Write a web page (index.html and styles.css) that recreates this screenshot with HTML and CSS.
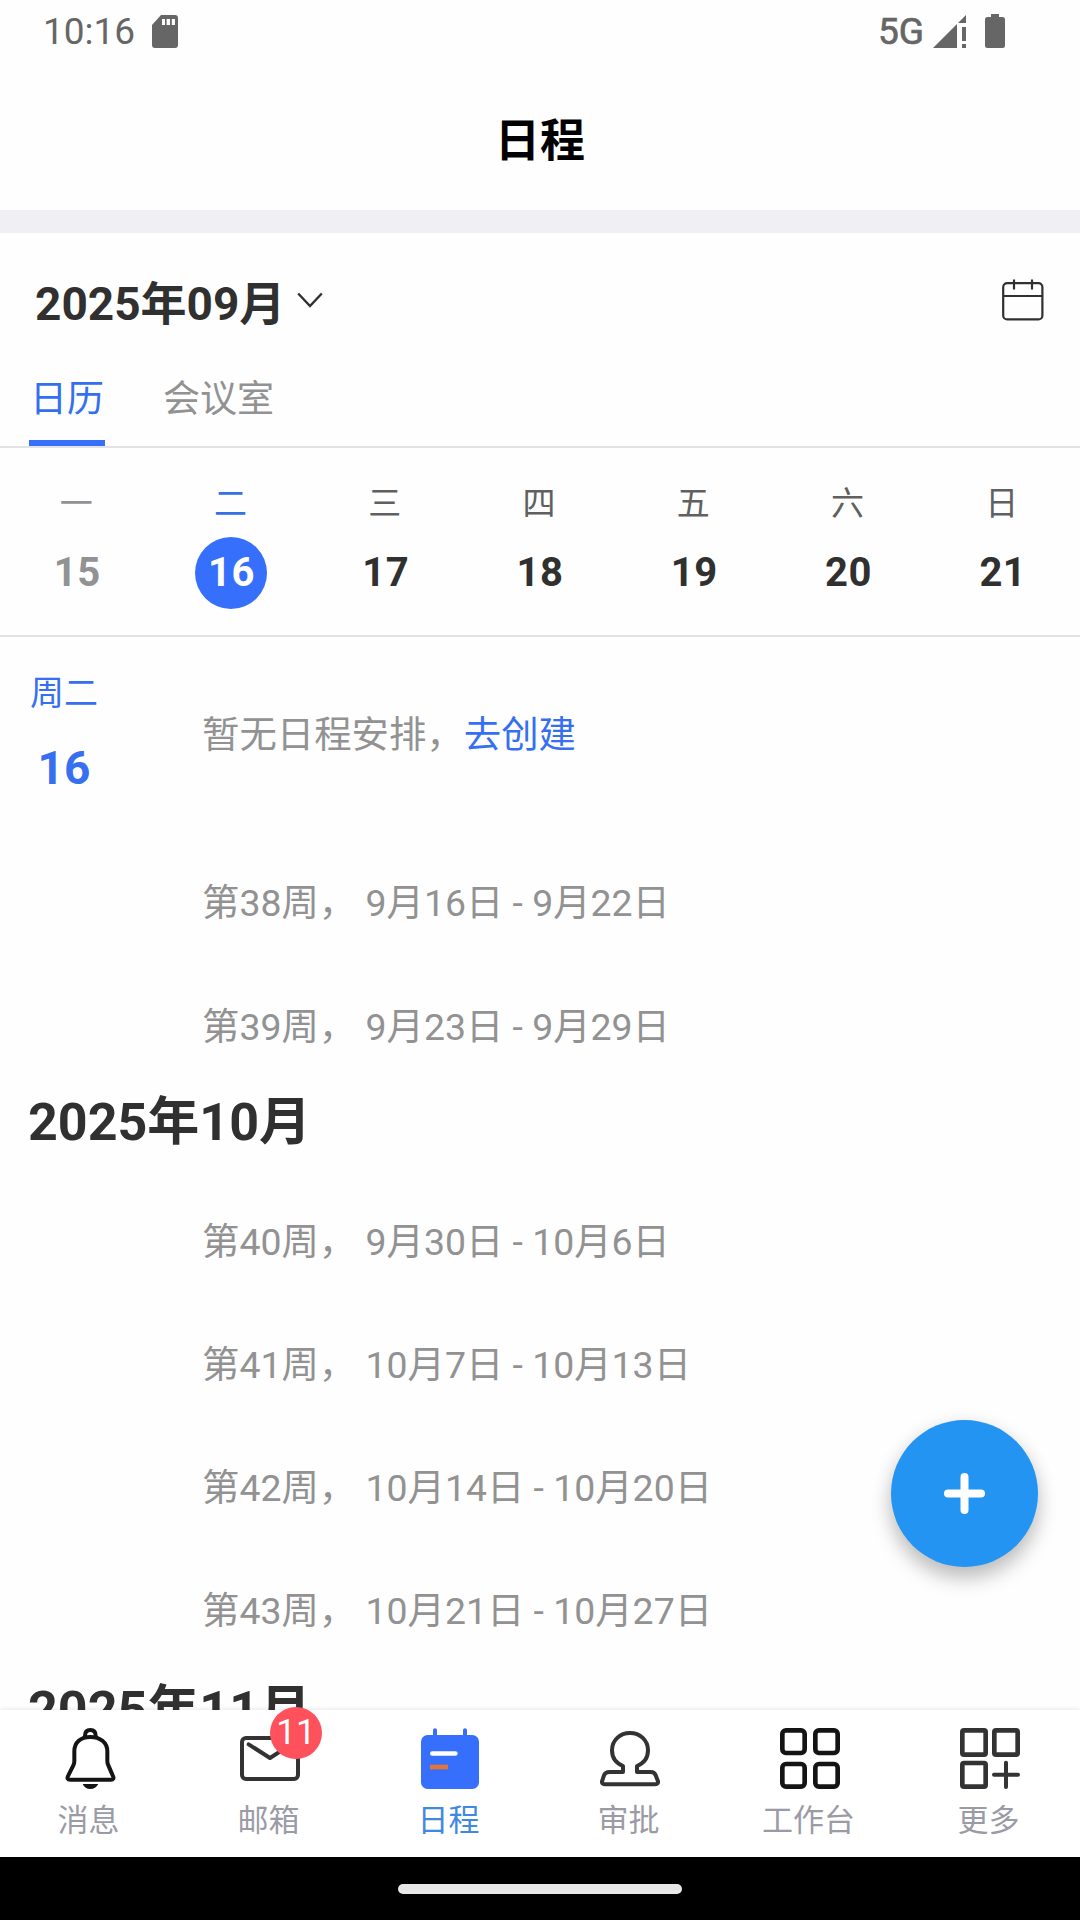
FILE: index.html
```html
<!DOCTYPE html>
<html lang="zh-CN">
<head>
<meta charset="utf-8">
<title>日程</title>
<link rel="stylesheet" href="styles.css">
</head>
<body>
<div class="screen">
  <header class="status">
    <span class="clock">10:16</span>
    <svg class="sd" viewBox="0 0 26 33"><path fill-rule="evenodd" d="M9 0H23Q26 0 26 3V30Q26 33 23 33H3Q0 33 0 30V10ZM10 4V10H13V4ZM14.600 4V10H18V4ZM19.800 4V10H23V4Z"/></svg>
    <span class="network">5G</span>
    <svg class="signal" viewBox="0 0 33 33"><path d="M0 33L24 9V33ZM25 8L33 0V8ZM29 12H33V26H29ZM29 29H33V33H29Z"/></svg>
    <svg class="battery" viewBox="0 0 20 34"><path d="M6 0H14V3H17.500Q20 3 20 5.500V31.500Q20 34 17.500 34H2.500Q0 34 0 31.500V5.500Q0 3 2.500 3H6Z"/></svg>
  </header>
  <h1 class="page-title">日程</h1>
  <div class="divider"></div>

  <div class="month-bar">
    <span class="month">2025年09月</span>
    <svg class="chevron" viewBox="0 0 26 16"><path d="M1.200 1.500L13 14L24.800 1.500"/></svg>
    <svg class="cal" viewBox="0 0 42 42"><rect x="1.200" y="4.200" width="39.200" height="36.200" rx="4"/><path d="M1 17H41M12 .5V10.500M30 .5V10.500"/></svg>
  </div>

  <nav class="tabs">
    <span class="tab tab-on">日历</span>
    <span class="tab">会议室</span>
  </nav>

  <section class="week">
    <div class="day past"><span class="dow">一</span><span class="date">15</span></div>
    <div class="day today"><span class="dow">二</span><span class="date">16</span></div>
    <div class="day"><span class="dow">三</span><span class="date">17</span></div>
    <div class="day"><span class="dow">四</span><span class="date">18</span></div>
    <div class="day"><span class="dow">五</span><span class="date">19</span></div>
    <div class="day"><span class="dow">六</span><span class="date">20</span></div>
    <div class="day"><span class="dow">日</span><span class="date">21</span></div>
  </section>

  <main class="agenda">
    <div class="agenda-day">
      <div class="agenda-label"><span class="agenda-dow">周二</span><span class="agenda-date">16</span></div>
      <p class="empty">暂无日程安排，<a class="create">去创建</a></p>
    </div>
    <p class="range">第38周， 9月16日 - 9月22日</p>
    <p class="range">第39周， 9月23日 - 9月29日</p>
    <h2 class="next-month">2025年10月</h2>
    <p class="range">第40周， 9月30日 - 10月6日</p>
    <p class="range">第41周， 10月7日 - 10月13日</p>
    <p class="range">第42周， 10月14日 - 10月20日</p>
    <p class="range">第43周， 10月21日 - 10月27日</p>
    <h2 class="next-month">2025年11月</h2>
  </main>

  <button class="fab" aria-label="新建"><svg viewBox="0 0 41 41"><path d="M20.500 4V37M4 20.500H37"/></svg></button>

  <footer class="nav">
    <div class="nav-item">
      <svg viewBox="0 0 180 183" class="ink"><path d="M75 27V23Q75 6 91 6T107 23V27"/><path d="M91 27C62 27 43 43 43 70V100Q43 106 40 112L25 142Q18 155 31 155H152Q165 155 158 142L145 112Q142 106 142 100V70C142 43 120 27 91 27Z"/><path class="solid" d="M68 168H115Q107 183 91 183T68 168Z"/></svg>
      <span>消息</span>
    </div>
    <div class="nav-item">
      <svg viewBox="0 0 180 183" class="soft-ink"><rect x="6" y="30" width="168" height="123" rx="12"/><path d="M26 49L90 90L152 50"/></svg>
      <span>邮箱</span>
      <b class="badge">11</b>
    </div>
    <div class="nav-item nav-on">
      <svg viewBox="0 0 180 183"><path class="pins" d="M45 7V40M135 7V40"/><rect class="page" x="3" y="21" width="174" height="162" rx="20"/><path class="line-a" d="M37 76.500H106"/><path class="line-b" d="M30 117H84"/></svg>
      <span>日程</span>
    </div>
    <div class="nav-item">
      <svg viewBox="0 0 180 183" class="soft-ink"><path d="M69 132V114C49 106 36 89 36 67C36 37 60 15 90 15S144 37 144 67C144 89 131 106 111 114V132H152Q164 132 167 142L174 160Q175 169 164 169H16Q5 169 6 160L12 142Q16 132 28 132H69"/></svg>
      <span>审批</span>
    </div>
    <div class="nav-item">
      <svg viewBox="0 0 180 183" class="ink grid-icon"><rect x="7" y="7" width="67" height="68" rx="11"/><rect x="106" y="7" width="67" height="68" rx="11"/><rect x="7" y="108" width="67" height="68" rx="11"/><rect x="106" y="108" width="67" height="68" rx="11"/></svg>
      <span>工作台</span>
    </div>
    <div class="nav-item">
      <svg viewBox="0 0 180 183" class="soft-ink grid-icon"><rect x="7" y="7" width="70" height="73" rx="5"/><rect x="103" y="7" width="70" height="73" rx="5"/><rect x="7" y="105" width="70" height="71" rx="5"/><path class="plus" d="M138 104V177M102 140H174"/></svg>
      <span>更多</span>
    </div>
  </footer>
  <div class="gesture"><i></i></div>
</div>
</body>
</html>
```

FILE: styles.css
```css
* { box-sizing: border-box; margin: 0; padding: 0; }
body { background: #fff; font-family: Roboto, "Noto Sans CJK SC", sans-serif; }
svg { display: block; flex: none; }

.screen {
  position: relative;
  width: 1080px;
  height: 1920px;
  display: flex;
  flex-direction: column;
  overflow: hidden;
  background: #fefefe;
}
.screen > * { flex: none; }

.status {
  display: flex;
  align-items: center;
  height: 62px;
  padding: 0 75px 0 43px;
  color: #666;
  font-size: 37px;
  fill: #666;
}
.clock { width: 109px; }
.sd { width: 26px; height: 33px; }
.network { margin-left: auto; font-size: 37px; font-weight: 400; -webkit-text-stroke: .7px #666; }
.signal { width: 33px; height: 33px; margin-left: 9px; }
.battery { width: 20px; height: 34px; margin-left: 19px; }

.page-title {
  height: 148px;
  line-height: 159px;
  text-align: center;
  font-size: 45px;
  font-weight: 700;
  color: #000;
}
.divider { height: 23px; background: #f0eff4; }

.month-bar {
  display: flex;
  align-items: center;
  height: 142px;
  padding: 0 36px 0 35px;
}
.month { font-size: 46px; font-weight: 700; color: #303030; line-height: 60px; }
.chevron { width: 26px; height: 16px; margin: -8px 0 0 12px; fill: none; stroke: #303030; stroke-width: 2.4; }
.cal { width: 42px; height: 42px; margin: -8px 0 0 auto; fill: none; stroke: #303030; stroke-width: 2.2; }

.tabs {
  display: flex;
  gap: 58px;
  height: 73px;
  padding-left: 29px;
  border-bottom: 2px solid #e2e2e2;
}
.tab {
  height: 71px;
  line-height: 49px;
  font-size: 37px;
  color: #929292;
}
.tab-on { width: 76px; text-align: center; color: #3370f0; border-bottom: 6px solid #3670fa; }

.week {
  display: grid;
  grid-template-columns: repeat(7, 1fr);
  height: 189px;
  padding-top: 29px;
  border-bottom: 2px solid #e2e2e2;
}
.day { display: flex; flex-direction: column; align-items: center; }
.dow { height: 60px; padding-right: 2px; line-height: 53px; font-size: 33px; color: #606060; }
.date {
  width: 72px;
  height: 72px;
  line-height: 71px;
  border-radius: 50%;
  text-align: center;
  font-size: 40px;
  font-weight: 700;
  letter-spacing: .5px;
  color: #303030;
}
.past .dow, .past .date { color: #929295; }
.today .dow { color: #3670e8; }
.today .date { color: #fff; background: #366ffc; }

.agenda { height: 1073px; overflow: hidden; }
.agenda-day { display: flex; height: 205px; padding-top: 26px; }
.agenda-label {
  display: flex;
  flex-direction: column;
  align-items: center;
  width: 202px;
  padding: 0 74px 0 0;
  color: #3670f0;
}
.agenda-dow { line-height: 60px; font-size: 34px; }
.agenda-date { line-height: 90px; font-size: 46px; font-weight: 700; }
.empty { line-height: 144px; font-size: 37.4px; color: #929292; }
.create { color: #3670f0; }
.range { height: 123px; padding-left: 202px; line-height: 123px; font-size: 37.4px; color: #929292; white-space: pre; }
.agenda-day + .range { margin-bottom: 1px; }
.next-month {
  height: 70px;
  margin: -1px 0 23px;
  padding-left: 28px;
  line-height: 70px;
  font-size: 52px;
  font-weight: 700;
  color: #303030;
}
.range + .next-month:last-child { margin-top: 3px; }

/* Floating create button */
.fab {
  position: absolute;
  left: 891px;
  top: 1420px;
  width: 147px;
  height: 147px;
  display: grid;
  place-items: center;
  border: 0;
  border-radius: 50%;
  background: #2394f2;
  box-shadow: 0 12px 20px rgba(0, 0, 0, .22), 0 3px 20px rgba(0, 0, 0, .08);
}
.fab svg { width: 41px; height: 41px; fill: none; stroke: #fff; stroke-width: 8; stroke-linecap: round; }

.nav {
  display: grid;
  grid-template-columns: repeat(6, 1fr);
  height: 147px;
  padding-top: 18px;
  background: #fff;
  box-shadow: 0 -2px 3px rgba(0, 0, 0, .06);
}
.nav-item {
  position: relative;
  display: flex;
  flex-direction: column;
  align-items: center;
  font-size: 31px;
  line-height: 63px;
  color: #9b9ba6;
}
.nav-item span { padding-right: 3px; }
.nav-item svg { width: 60px; height: 61px; fill: none; stroke-width: 12; stroke-linecap: round; stroke-linejoin: round; }
.nav-item .grid-icon { stroke-width: 14; }
.plus { stroke-width: 12; }
.ink { stroke: #141414; }
.ink .solid { fill: #141414; stroke: none; }
.soft-ink { stroke: #333; }
.nav-on { color: #4088e2; }
.pins { stroke: #366ffc; }
.page { fill: #366ffc; }
.line-a { stroke: #fff; stroke-width: 14; }
.line-b { stroke: #e47438; stroke-width: 14; stroke-linecap: butt; }
.badge {
  position: absolute;
  left: 90px;
  top: -21px;
  width: 52px;
  height: 52px;
  border-radius: 50%;
  background: #ff515c;
  color: #fff;
  text-align: center;
  font-size: 35px;
  line-height: 51px;
  font-weight: 400;
}

.gesture { display: flex; justify-content: center; height: 63px; padding-top: 27px; background: #000; }
.gesture i { width: 284px; height: 10px; border-radius: 5px; background: #e8e8e8; }
```
